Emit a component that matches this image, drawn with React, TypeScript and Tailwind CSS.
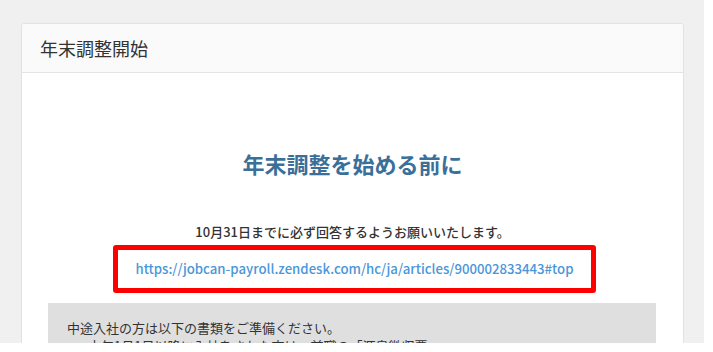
export default function App() {
  return (
    <div className="w-[713px] h-[352px] bg-white overflow-hidden">
      <div
        className="w-[704px] h-[343px] overflow-hidden bg-[#f0f0f0] pl-[21px] pt-[23px]"
        style={{ fontFamily: '"Noto Sans CJK JP", "Noto Sans", sans-serif' }}
      >
        <div className="w-[663px] h-[400px] rounded-[3px] border border-[#e2e2e2] bg-white">
          {/* header */}
          <div className="h-[49px] flex items-center pl-[18px] bg-[#fafafa] border-b border-[#e4e4e4] rounded-t-[3px]">
            <h2 className="text-[18px] leading-none text-[#333]">年末調整開始</h2>
          </div>

          <div className="pt-[74px]">
            <h1 className="text-center text-[22px] leading-[32px] font-bold text-[#3a6f9a]">
              年末調整を始める前に
            </h1>
            <p className="mt-[43px] text-center text-[13px] leading-[20px] font-medium text-[#333]">
              10月31日までに必ず回答するようお願いいたします。
            </p>
            <div className="mt-[3px] ml-[91px] w-[483px] h-[48px] rounded-[3px] border-[5px] border-[#ff0000] flex items-center justify-center">
              <a href="#" className="text-[13.2px] font-medium text-[#4a96d9]">
                https://jobcan-payroll.zendesk.com/hc/ja/articles/900002833443#top
              </a>
            </div>
            <div className="mt-[10px] ml-[26px] w-[608px] bg-[#dfdfdf] pt-[16px] pl-[19px] text-[13px] leading-[18px] text-[#333]">
              <p>中途入社の方は以下の書類をご準備ください。</p>
              <p className="pl-[8px]">・本年1月1日以降に入社をされた方は、前職の「源泉徴収票」</p>
            </div>
          </div>
        </div>
      </div>
    </div>
  );
}
